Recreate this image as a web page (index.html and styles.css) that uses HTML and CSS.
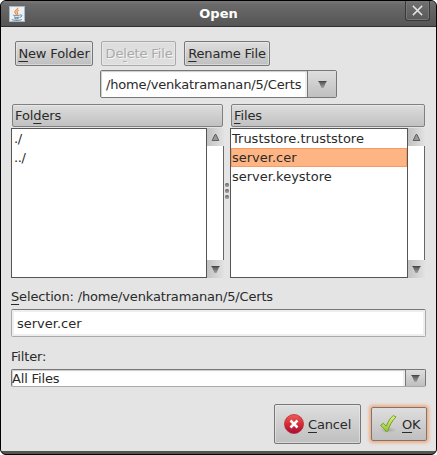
FILE: index.html
```html
<!DOCTYPE html>
<html lang="en">
<head>
<meta charset="utf-8">
<title>Open</title>
<link rel="stylesheet" href="styles.css">
</head>
<body>
<svg width="0" height="0" class="defs">
  <defs>
    <linearGradient id="arrow" x1="0" y1="0" x2="0" y2="1"><stop offset="0" stop-color="#4c4c4c"/><stop offset="1" stop-color="#a0a0a0"/></linearGradient>
    <linearGradient id="red" x1="0" y1="0" x2="0" y2="1"><stop offset="0" stop-color="#ef5c5c"/><stop offset=".5" stop-color="#d82c30"/><stop offset="1" stop-color="#a40c3c"/></linearGradient>
    <linearGradient id="green" x1="0" y1="0" x2="0" y2="1"><stop offset="0" stop-color="#e3ed83"/><stop offset="1" stop-color="#94c832"/></linearGradient>
    <radialGradient id="shade"><stop offset="0" stop-color="#777" stop-opacity=".5"/><stop offset="1" stop-color="#999" stop-opacity="0"/></radialGradient>
    <symbol id="down" viewBox="0 0 9 9"><path d="M.5 1h8l-3 7h-2z" fill="url(#arrow)"/><path d="M.5 1.500h8" stroke="#484848"/></symbol>
    <symbol id="up" viewBox="0 0 9 9"><path d="M1.200 7.500h6.600L5 1.500H4z" fill="#999" stroke="#555" stroke-width=".9"/></symbol>
  </defs>
</svg>
<div class="window">
  <header class="titlebar">
    <svg class="java" viewBox="0 0 16 16"><rect x=".5" y=".5" width="15" height="15" fill="#edf1f3" stroke="#a7bac8"/><path d="M8.800 1.700c.8 1.500-3.300 2.700-3 4.300.2 1 1.500 1.700 1.600 2.800M9.800 4.200C7.200 5.400 7.700 6 8.500 7c.5.6 0 1.200-.4 1.600" fill="none" stroke="#ed8534" stroke-width="1.200"/><path d="M4.500 8.900c-1.500.8 6.200 1 6.200 0M11 9c3-.5 2 2-.3 2.500M5 10.900c1.500.8 4 .7 5.300.1M5.500 12.500c1 .5 2.600.5 4 .1M3 13c-1 1.700 9.500 1.800 10 .2" fill="none" stroke="#567e9e" stroke-width="1"/></svg>
    <span class="title">Open</span>
    <div class="close"><svg viewBox="0 0 10 10"><path d="M.8.8l8.400 8.400M9.200.8L.8 9.200" stroke="#e2e2e2" stroke-width="1.300"/></svg></div>
  </header>
  <main class="content">
    <div class="actions">
      <button class="btn new"><span><u>N</u>ew Folder</span></button>
      <button class="btn delete" disabled><span>De<u>l</u>ete File</span></button>
      <button class="btn rename"><span><u>R</u>ename File</span></button>
    </div>
    <div class="combo path"><div class="value">/home/venkatramanan/5/Certs</div><div class="drop"><svg><use href="#down"/></svg></div></div>
    <div class="panes">
      <section class="pane folders">
        <div class="head"><span>Fol<u>d</u>ers</span></div>
        <div class="body">
          <div class="list"><div>./</div><div>../</div></div>
          <div class="scroll"><div class="arrow"><svg><use href="#up"/></svg></div><div class="track"></div><div class="arrow"><svg><use href="#down"/></svg></div></div>
        </div>
      </section>
      <div class="grip"><i></i><i></i><i></i></div>
      <section class="pane files">
        <div class="head"><span><u>F</u>iles</span></div>
        <div class="body">
          <div class="list"><div>Truststore.truststore</div><div class="selected">server.cer</div><div>server.keystore</div></div>
          <div class="scroll"><div class="arrow"><svg><use href="#up"/></svg></div><div class="track"></div><div class="arrow"><svg><use href="#down"/></svg></div></div>
        </div>
      </section>
    </div>
    <div class="label selection"><span><u>S</u>election: /home/venkatramanan/5/Certs</span></div>
    <div class="field">server.cer</div>
    <div class="label filter">Filter:</div>
    <div class="combo types"><div class="value">All Files</div><div class="drop"><svg><use href="#down"/></svg></div></div>
    <div class="footer">
      <button class="btn cancel">
        <svg class="icon" viewBox="0 0 20 20"><circle cx="10" cy="10" r="9.500" fill="url(#red)" stroke="#b22c35" stroke-width=".8"/><path d="M6.500 6.500l7 7M13.500 6.500l-7 7" stroke="#fff" stroke-width="2.600"/></svg>
        <span><u>C</u>ancel</span>
      </button>
      <button class="btn ok">
        <svg class="icon" viewBox="0 0 20 20"><ellipse cx="9" cy="16" rx="9" ry="3" fill="url(#shade)"/><path d="M1.500 11.500L4.300 9.200 7.300 12.200C9 7.500 11.300 4 14.200 1.600L17 2.900C13.300 6.500 10.500 11.300 8.700 17.200L6.800 17.400C5.200 14.800 3.500 12.900 1.500 11.500z" fill="url(#green)" stroke="#71a12c"/></svg>
        <span><u>O</u>K</span>
      </button>
    </div>
  </main>
</div>
</body>
</html>
```
FILE: styles.css
```css
* { box-sizing: border-box; }
body { margin: 0; background: #fff; font: 13px/19px "DejaVu Sans", sans-serif; color: #2a2a2a; overflow: hidden; }
.defs { position: absolute; }
u { text-decoration: underline; text-decoration-thickness: 1px; text-underline-offset: 3px; text-decoration-skip-ink: none; }
.window { width: 437px; height: 455px; border: 1px solid #000; border-radius: 6px; background: #555; overflow: hidden; display: flex; flex-direction: column; padding-bottom: 3px; }
.titlebar { height: 26px; flex: none; display: grid; grid-template-columns: 32px 1fr 32px; background: linear-gradient(#777 0, #696969 4px, #565656 24px); border-bottom: 1px solid #303030; }
.java { width: 16px; height: 16px; margin: 5px 0 0 8px; }
.title { color: #fff; font-weight: bold; text-align: center; line-height: 25px; }
.close { width: 25px; height: 20px; margin-left: 1px; border: 1px solid #383838; border-top: 0; border-radius: 0 0 3px 3px; background: linear-gradient(#717171, #595959); display: flex; align-items: center; justify-content: center; box-shadow: inset 0 0 0 1px #777; }
.close svg { width: 11px; height: 11px; }
.content { flex: 1; min-height: 0; background: #e4e4e4; padding: 14px 10px 0 10px; display: flex; flex-direction: column; }
.actions { display: flex; gap: 8px; padding-left: 4px; }
.btn { font: inherit; color: inherit; border: 1px solid #777; border-radius: 2px; padding: 0; background: linear-gradient(#dedede, #bfbfbf); box-shadow: inset 0 0 0 1px #eee8; height: 25px; white-space: nowrap; letter-spacing: -.15px; }
.new { width: 78px; }
.delete { width: 75px; color: #aaa; border-color: #aaa; background: #dedede; text-shadow: 1px 1px #f5f5f5; padding-left: 1px; }
.rename { width: 86px; }
.combo { display: flex; border: 1px solid #777; border-radius: 2px; background: #fff; }
.value { flex: 1; box-shadow: inset 1px 1px 1px #ccc, inset -2px 0 #eee; white-space: nowrap; letter-spacing: -.16px; }
.drop { border-left: 1px solid #777; background: linear-gradient(#dedede, #bfbfbf); display: flex; align-items: center; justify-content: center; }
.drop svg, .arrow svg { width: 9px; height: 9px; }
.path { width: 237px; height: 28px; margin: 4px 0 0 89px; }
.path .value { padding-left: 5px; line-height: 27px; }
.path .drop { width: 29px; }
.panes { display: flex; margin-top: 6px; height: 174px; }
.pane { display: flex; flex-direction: column; }
.folders { width: 213px; }
.files { width: 195px; }
.head { height: 23px; margin: 0 1px 1px; border: 1px solid #808080; border-radius: 2px; padding-left: 2px; background: linear-gradient(#ddd, #c1c1c1); line-height: 21px; box-shadow: inset 0 1px #e8e8e8; letter-spacing: -.12px; }
.files .head { margin-right: 0; }
.body { display: flex; flex: 1; }
.list { flex: 1; background: #fff; border: 1px solid #555; padding: 0; white-space: nowrap; }
.list div { height: 19px; padding-left: 1px; line-height: 19px; }
.folders .list div { padding-left: 2px; letter-spacing: -.4px; }
.list .selected { background: #ffb583; box-shadow: inset 0 0 0 1px #f69a66; }
.scroll { width: 17px; display: flex; flex-direction: column; }
.arrow { height: 18px; background: linear-gradient(90deg, #c2c2c2, #e2e2e2); display: flex; align-items: center; justify-content: center; }
.track { flex: 1; background: #fff; border-right: 1px solid #666; }
.grip { width: 6px; display: flex; flex-direction: column; justify-content: center; gap: 2px; align-items: center; }
.grip i { width: 4px; height: 4px; border-radius: 1.5px; background: linear-gradient(#666, #aaa); }
.label { height: 19px; white-space: nowrap; letter-spacing: -.16px; }
.selection { margin-top: 9px; }
.field { height: 28px; margin-top: 3px; border: 1px solid #aaa; border-top-color: #777; border-radius: 2px; background: #fff; box-shadow: inset 0 0 0 2px #eee; padding-left: 5px; line-height: 27px; }
.filter { margin-top: 10px; }
.types { height: 18px; margin-top: 3px; border-bottom-color: #aaa; }
.types .value { line-height: 17px; }
.types .drop { width: 20px; }
.footer { display: flex; justify-content: flex-end; align-items: center; gap: 10px; margin: 17px -1px 0 0; }
.cancel, .ok { display: flex; align-items: center; }
.cancel { width: 87px; height: 40px; padding-left: 9px; gap: 4px; }
.ok { width: 56px; height: 34px; padding-left: 7px; gap: 3px; box-shadow: 0 0 3px 2px #f6ac82; }
.icon { width: 20px; height: 20px; flex: none; }
```
